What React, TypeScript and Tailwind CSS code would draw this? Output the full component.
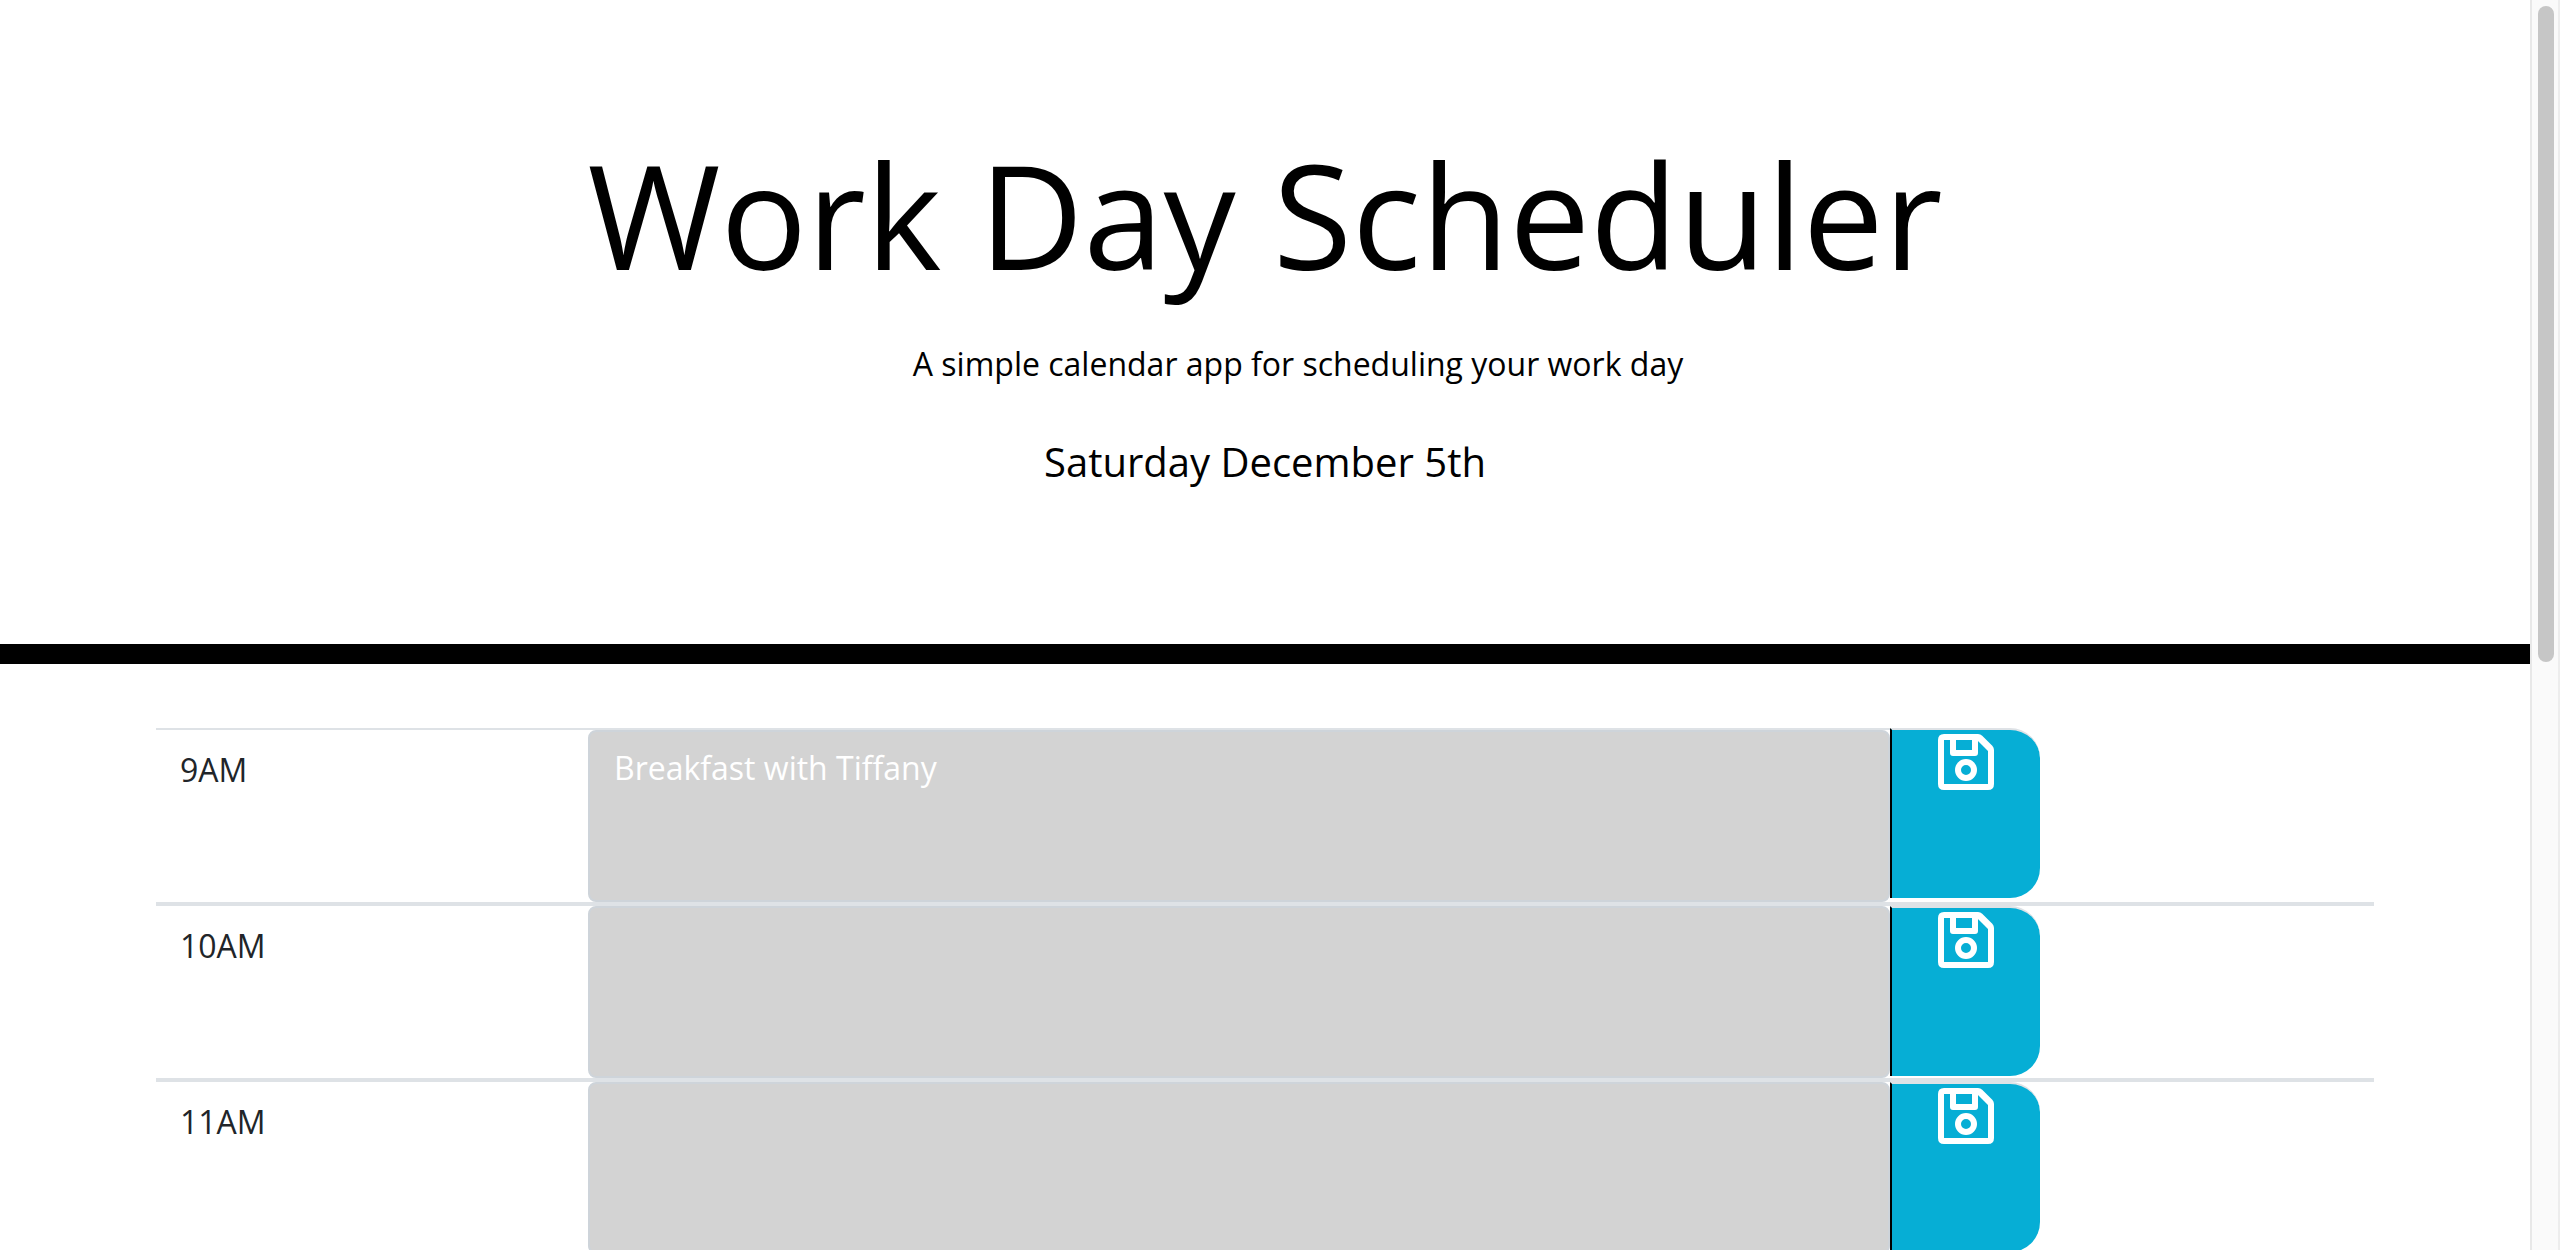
import React from "react";

type Slot = { hour: string; event: string };

const slots: Slot[] = [
  { hour: "9AM", event: "Breakfast with Tiffany" },
  { hour: "10AM", event: "" },
  { hour: "11AM", event: "" },
];

function SaveIcon() {
  return (
    <svg viewBox="0 0 56 56" className="size-14" aria-hidden="true">
      <path
        fill="currentColor"
        fillRule="evenodd"
        d="M6 0H40Q42.500 0 44.200 1.700L54.300 11.800Q56 13.500 56 16V50Q56 56 50 56H6Q0 56 0 50V6Q0 0 6 0ZM6 6V50H50V17L39 6Z"
      />
      <path d="M15 3V19H37V3" fill="none" stroke="currentColor" strokeWidth="6" strokeLinejoin="round" />
      <circle cx="28" cy="36" r="8" fill="none" stroke="currentColor" strokeWidth="6" />
    </svg>
  );
}

function SlotRow({ hour, event }: Slot) {
  const id = `slot-${hour}`;
  return (
    <tr className="group align-top">
      <th
        scope="row"
        className="border-y-2 border-[#dee2e6] px-6 py-4 text-left text-[32px] leading-[48px] font-normal text-[#212529]"
      >
        <label htmlFor={id}>{hour}</label>
      </th>
      <td className="border-y-2 border-[#dee2e6] p-0">
        <textarea
          id={id}
          defaultValue={event}
          className="block h-[172px] w-full resize-none rounded-lg border-2 border-[#ced4da] bg-[#d3d3d3] px-6 py-3 text-[32px] leading-[48px] text-white outline-none"
        />
      </td>
      <td className="border-y-2 border-[#dee2e6] p-0 group-first:border-t-0">
        <button
          type="button"
          aria-label={`Save ${hour}`}
          className="flex h-[170px] w-full items-start justify-center rounded-r-[30px] border-t-2 border-l-2 border-t-[#dee2e6] border-l-black bg-[#06aed5] pt-1 text-white"
        >
          <SaveIcon />
        </button>
      </td>
      <td className="border-y-2 border-[#dee2e6] p-0 group-first:border-t-0" />
    </tr>
  );
}

export default function App() {
  return (
    <div className="flex h-screen overflow-hidden bg-white font-['Open_Sans',sans-serif]">
      <div className="min-w-0 flex-1 overflow-hidden">
        <header className="border-b-[20px] border-black px-8 pt-32 pb-38 text-center text-black">
          <h1 className="text-[144px] leading-[172px] font-normal">Work Day Scheduler</h1>
          <p className="mt-10 pl-[66px] text-[32px] leading-[48px]">
            A simple calendar app for scheduling your work day
          </p>
          <p className="mt-11 text-[40px] leading-[60px]">Saturday December 5th</p>
        </header>
        <main className="mx-auto mt-16 max-w-[2218px]">
          <table className="w-full table-fixed border-separate border-spacing-0">
            <colgroup>
              <col className="w-[432px]" />
              <col />
              <col className="w-[150px]" />
              <col className="w-[334px]" />
            </colgroup>
            <tbody>
              {slots.map((slot) => (
                <SlotRow key={slot.hour} {...slot} />
              ))}
            </tbody>
          </table>
        </main>
      </div>
      <div className="w-[30px] shrink-0 border-r-2 border-l-2 border-r-[#ededed] border-l-[#e8e8e8] bg-[#fafafa] py-1.5 pr-1 pl-1.5">
        <div className="h-[53%] w-4 rounded-full bg-[#c6c6c6]" />
      </div>
    </div>
  );
}
